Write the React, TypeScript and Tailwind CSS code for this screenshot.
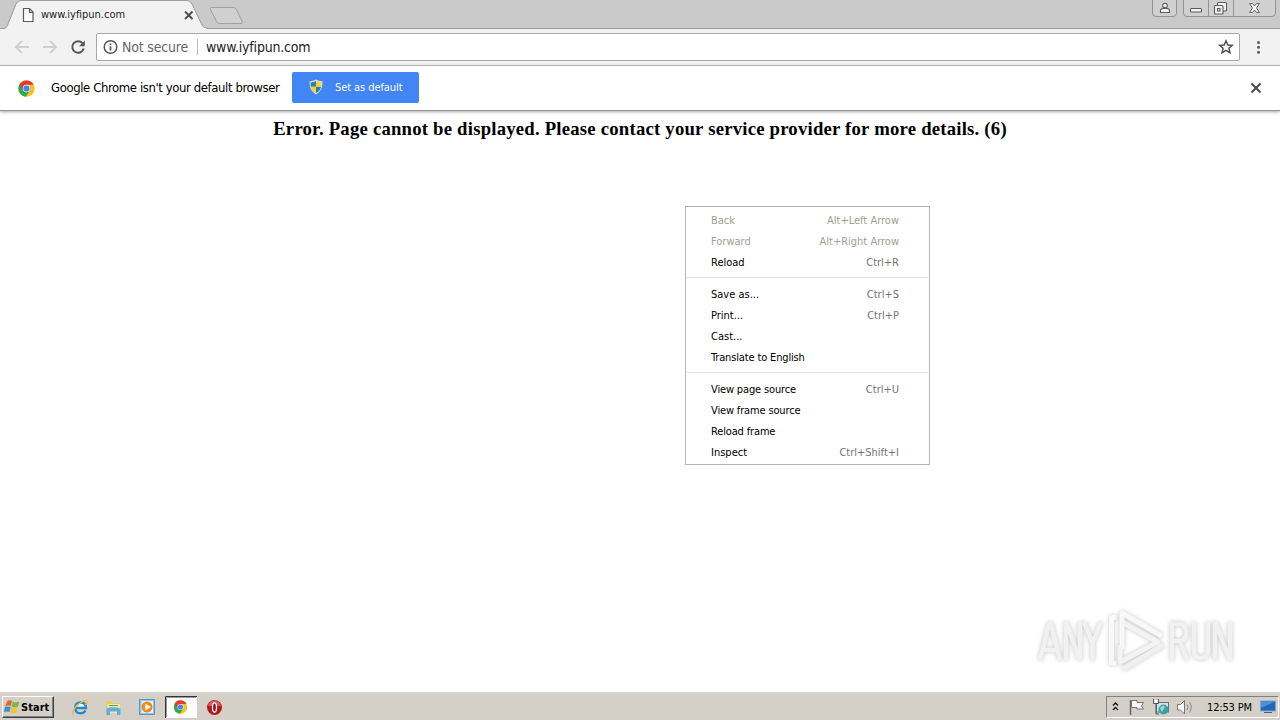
import React from "react";

function ChromeLogo({ className }: { className: string }) {
  return (
    <svg viewBox="0 0 48 48" className={className}>
      <circle cx="24" cy="24" r="23" fill="#fbc116" />
      <path d="M4.1 12.5 A23 23 0 0 0 22 47 L33.5 29.5 L24 24 Z" fill="#2da94f" />
      <path d="M4.1 12.5 A23 23 0 0 1 44.2 13.500 H24 L14.500 29.500 Z" fill="#e33b2e" />
      <circle cx="24" cy="24" r="10.500" fill="#f4f7ff" />
      <circle cx="24" cy="24" r="8.8" fill="#4285f4" />
    </svg>
  );
}

function TabStrip() {
  return (
    <div className="relative flex h-[29px] shrink-0 bg-[#cacaca]">
      <svg className="block h-[29px] w-[250px]" viewBox="0 0 250 29">
        <path d="M0 28.500 H4 C7 28 7 26 8 24 L16 4 Q18 .5 21 .5 H187 Q190 .5 192 4 L202 25 Q203.500 28.500 208 28.500 H250 V30 H0 Z" fill="#f2f2f2" stroke="#9b9b9b" />
        <path d="M6 28 H206 V29.500 H6Z" fill="#f2f2f2" />
        <path d="M211 7.500 H233.500 Q235.500 7.500 236.500 9.500 L242 21.500 Q243 23.500 241 23.500 H220 Q217.500 23.500 216.500 21.500 L210.500 9.500 Q209.500 7.500 211 7.500Z" fill="#d0d0d0" stroke="#a0a0a0" />
        <path d="M23.500 8.500 H29.500 L33 12 V21.500 H23.500Z M29.500 8.500 V12.500 H33" fill="#fff" stroke="#5a5a5a" strokeWidth="1.200" />
        <path d="M185 11.500 L192.500 19 M192.500 11.500 L185 19" stroke="#4a4a4a" strokeWidth="1.800" />
      </svg>
      <span className="absolute top-[8px] left-[41px] text-[11px] leading-[14px] tracking-[-0.02px] whitespace-pre text-[#222]">www.iyfipun.com</span>
      <div className="grow border-b border-[#9b9b9b]" />
      <svg className="absolute top-0 right-0 h-[18px] w-[130px]" viewBox="1150 0 130 18">
        <g fill="#d0d0d0" stroke="#939393">
          <path d="M1152.500 -1 V13 Q1152.500 16.500 1156 16.500 H1173 Q1176.500 16.500 1176.500 13 V-1Z" />
          <path d="M1183.500 -1 V13 Q1183.500 16.500 1187 16.500 H1272 Q1275.500 16.500 1275.500 13 V-1Z" />
          <path d="M1208.500 0 V16 M1233.500 0 V16" />
        </g>
        <g fill="#f4f4f4" stroke="#5c5c5c" strokeWidth="1.100">
          <path d="M1160.500 12.500 V11 Q1160.500 8.500 1163 8.500 H1167 Q1169.500 8.500 1169.500 11 V12.500Z" />
          <circle cx="1165" cy="5.500" r="2.300" />
          <rect x="1190.500" y="8.500" width="11" height="3.500" rx="1" />
          <rect x="1217.500" y="2.500" width="9" height="8.500" rx="1" />
          <rect x="1214.500" y="5.500" width="8.500" height="8.500" rx="1" />
          <rect x="1217.500" y="8.500" width="2.500" height="2.500" />
          <path d="M1249.500 3.500 H1252.500 L1254.500 6 L1256.500 3.500 H1259.500 L1256.500 8 L1259.500 12.500 H1256.500 L1254.500 10 L1252.500 12.500 H1249.500 L1252.500 8Z" strokeWidth=".9" />
        </g>
      </svg>
    </div>
  );
}

function Toolbar() {
  return (
    <div className="flex h-[37px] shrink-0 items-center border-b border-[#b4b4b4] bg-[#f2f2f2]">
      <svg className="h-[36px] w-[96px] shrink-0" viewBox="0 29 96 36" fill="none">
        <path d="M29 47 H16 M22 40.800 L15.800 47 L22 53.200" stroke="#cfcfcf" strokeWidth="1.900" />
        <path d="M43 47 H56 M50 40.800 L56.200 47 L50 53.200" stroke="#cfcfcf" strokeWidth="1.900" />
        <path d="M82.500 43.200 A5.800 5.800 0 1 0 83.700 48.500" stroke="#575757" strokeWidth="2" />
        <path d="M84.800 40.500 V46.300 H79Z" fill="#575757" />
      </svg>
      <div className="flex h-[28px] w-[1144px] items-center rounded-[2px] border border-[#a9a9a9] bg-white">
        <svg className="ml-[6px] h-4 w-4" viewBox="0 0 16 16" fill="none">
          <circle cx="7.500" cy="8" r="6.300" stroke="#555" strokeWidth="1.500" />
          <path d="M7.500 7.200 V11.500 M7.500 4.500 V6" stroke="#555" strokeWidth="1.700" />
        </svg>
        <span className="ml-[3px] w-[75px] text-[14px] leading-[18px] tracking-[-0.18px] whitespace-pre text-[#666]">Not secure</span>
        <span className="h-4 w-px bg-[#bcbcbc]" />
        <span className="ml-[8px] text-[14px] leading-[18px] tracking-[-0.2px] whitespace-pre text-[#222]">www.iyfipun.com</span>
        <svg className="mr-[5px] ml-auto h-4 w-4" viewBox="0 0 16 16">
          <path d="M8 1.800 L9.800 6 L14.300 6.300 L10.900 9.200 L12 13.700 L8 11.300 L4 13.700 L5.100 9.200 L1.700 6.300 L6.200 6Z" fill="none" stroke="#4c4c4c" strokeWidth="1.400" />
        </svg>
      </div>
      <svg className="h-[36px] w-[40px]" viewBox="1240 29 40 36" fill="#5a5a5a">
        <circle cx="1258.500" cy="42.500" r="1.500" />
        <circle cx="1258.500" cy="47.300" r="1.500" />
        <circle cx="1258.500" cy="52.200" r="1.500" />
      </svg>
    </div>
  );
}

function InfoBar() {
  return (
    <div className="flex h-[45px] shrink-0 items-center border-b border-[#929292] bg-white shadow-[0_1px_3px_#aaa]">
      <ChromeLogo className="ml-[18px] h-[17px] w-[17px]" />
      <span className="ml-[16px] w-[241px] text-[13px] leading-4 tracking-[-0.4px] whitespace-pre text-black">Google Chrome isn't your default browser</span>
      <div className="mb-[2px] flex h-[31px] w-[127px] items-center rounded-[2px] bg-[#4285f4]">
        <svg className="ml-[17px] h-[16px] w-[14px]" viewBox="0 0 14 16">
          <path d="M7 .5 Q10 2.500 13.500 2.200 Q14 11.500 7 15.500 Q0 11.500 .5 2.200 Q4 2.500 7 .5Z" fill="#dfe0cf" />
          <path d="M7 2 Q4.500 3.500 1.700 3.400 L1.700 7.700 H7Z M7 7.700 H12.100 Q11.500 11.500 7 14Z" fill="#2d7fae" />
          <path d="M7 2 Q9.500 3.500 12.300 3.400 L12.200 7.700 H7Z M7 7.700 H1.900 Q2.500 11.500 7 14Z" fill="#f6cf35" />
        </svg>
        <span className="mt-px ml-[12px] text-[11px] leading-[14px] tracking-[-0.08px] whitespace-pre text-white">Set as default</span>
      </div>
      <svg className="mr-[18px] ml-auto h-[12px] w-[12px]" viewBox="0 0 12 12">
        <path d="M1.500 1.500 L10.500 10.500 M10.500 1.500 L1.500 10.500" stroke="#4a4a4a" strokeWidth="2" />
      </svg>
    </div>
  );
}

type Item = { label: string; keys?: string; disabled?: boolean };

const groups: Item[][] = [
  [
    { label: "Back", keys: "Alt+Left Arrow", disabled: true },
    { label: "Forward", keys: "Alt+Right Arrow", disabled: true },
    { label: "Reload", keys: "Ctrl+R" },
  ],
  [
    { label: "Save as...", keys: "Ctrl+S" },
    { label: "Print...", keys: "Ctrl+P" },
    { label: "Cast..." },
    { label: "Translate to English" },
  ],
  [
    { label: "View page source", keys: "Ctrl+U" },
    { label: "View frame source" },
    { label: "Reload frame" },
    { label: "Inspect", keys: "Ctrl+Shift+I" },
  ],
];

function ContextMenu() {
  return (
    <div className="absolute top-[206px] left-[685px] h-[259px] w-[245px] border border-[#b5b5b5] bg-white px-px pt-[4px] text-[11px]">
      {groups.map((items, i) => (
        <div key={i} className={i > 0 ? "mt-[3px] border-t border-[#e2e2e2] pt-[7px]" : ""}>
          {items.map((item) => (
            <div key={item.label} className="flex h-[21px] items-center justify-between pr-[29px] pl-[24px] whitespace-pre">
              <span className={item.disabled ? "text-[#a09f92]" : item.label.length > 10 ? "tracking-[-0.15px] text-black" : "text-black"}>{item.label}</span>
              <span className={item.disabled ? "text-[#a09f92]" : "text-[#747474]"}>{item.keys}</span>
            </div>
          ))}
        </div>
      ))}
    </div>
  );
}

function Watermark() {
  return (
    <svg className="absolute top-[600px] left-[1024px] h-[84px] w-[220px]" viewBox="1024 600 220 84">
      <g style={{ filter: "drop-shadow(0 0 2px #c4c4c4)" }}>
        <g fill="none" stroke="#f1f1f1" strokeWidth="4.500">
          <path d="M1040 660 L1049 624 H1051 L1060 660 M1043 650 H1057" />
          <path d="M1066 660 V624 H1067 L1079 658 H1080 V622" />
          <path d="M1084 622 L1092.500 643 L1101 622 M1092.500 642 V660" />
          <path d="M1172 660 V624 H1180 Q1186 624 1186 633 Q1186 641 1180 641 H1172 M1180 641 L1187 660" />
          <path d="M1194 622 V650 Q1194 658 1201 658 Q1208 658 1208 650 V622" />
          <path d="M1215 660 V624 H1216 L1229 658 H1230 V622" />
        </g>
        <g fill="none" stroke="#f8f8f8" strokeWidth="5" strokeLinejoin="round">
          <path d="M1116.500 617.500 H1111.500 V663 H1116.500" />
          <path d="M1122 649 V613 L1162 636" />
          <path d="M1122 622 L1158 642 L1120 662 V645" stroke="#f3f3f3" />
          <path d="M1163 645 L1123 669" stroke="#f0f0f0" />
        </g>
      </g>
    </svg>
  );
}

function TaskBar() {
  return (
    <div className="flex h-[28px] shrink-0 items-center border-t border-[#dedbd5] bg-[#d4d0c8] pt-px">
      <div className="ml-[2px] flex h-[22px] w-[52px] items-center border border-t-white border-r-[#404040] border-b-[#404040] border-l-white shadow-[inset_-1px_-1px_#808080]">
        <svg className="ml-px h-[16px] w-[16px]" viewBox="0 0 16 16">
          <path d="M3 2.500 Q5 .5 8 1.800 L6.800 7 Q4 6 1.200 7.300Z" fill="#e8622b" />
          <path d="M8.800 2.500 Q11.500 4.500 15.500 2.500 L13.800 7.700 Q10.500 9 7.600 7.400Z" fill="#75b843" />
          <path d="M1 8 Q3.800 6.800 6.800 8 L5.500 13 Q2.800 11.800 0 13Z" fill="#3b8edb" />
          <path d="M7.400 8.200 Q10.500 9.800 13.700 8.500 L12.300 13.400 Q9 15 6.200 13.400Z" fill="#f5c32c" />
        </svg>
        <span className="mt-px ml-px text-[11px] leading-[14px] font-bold tracking-[0.05px] text-black">Start</span>
      </div>
      <svg className="h-[26px] w-[176px]" viewBox="54 694 176 26">
        <g fill="none">
          <path d="M85.500 709 H76 Q76 703 80.500 702.500 Q85.500 703 85.500 709Z" fill="#e8f6ff" />
          <path d="M76 708 H86 Q86 702.500 80.500 702.500 Q75.200 702.500 75.200 708 Q75.500 713.300 80.500 713.300 Q84 713.300 85.500 710.500" stroke="#2389cf" strokeWidth="2.400" />
          <path d="M74 714 Q70.500 713 76.500 706 Q83 700 86.500 700.500 Q88 701.500 85.500 705" stroke="#efba3e" strokeWidth="1.400" />
        </g>
        <path d="M106 701 H111 L112 703 H119 V713 H106Z" fill="#ecc860" />
        <path d="M107.500 704 H120 V713 H107.500Z" fill="#fae79f" />
        <path d="M106.500 708.500 Q113 706 120.500 708.500 V715 H117 V711.500 H110 V715 H106.500Z" fill="#60aedb" />
        <path d="M109 705.500 H118" stroke="#4eaa72" />
        <rect x="139.500" y="699.500" width="15" height="15" fill="#8dc4ed" stroke="#5598ca" />
        <rect x="141.500" y="701" width="11.500" height="12" fill="#e8f4fb" />
        <circle cx="147" cy="707" r="5.500" fill="#f08a13" />
        <path d="M145.300 703.500 L151 707 L145.300 710.500Z" fill="#fff" />
        <rect x="165" y="696" width="32" height="22" fill="#fff" />
        <path d="M165.500 718 V696.500 H197" stroke="#333" fill="none" />
        <path d="M166.500 717 V697.500 H196" stroke="#999" fill="none" />
        <svg x="173.500" y="700" width="14" height="14" viewBox="0 0 48 48">
          <circle cx="24" cy="24" r="23" fill="#fbc116" />
          <path d="M4.1 12.5 A23 23 0 0 0 22 47 L33.5 29.5 L24 24 Z" fill="#2da94f" />
          <path d="M4.1 12.5 A23 23 0 0 1 44.2 13.500 H24 L14.500 29.500 Z" fill="#e33b2e" />
          <circle cx="24" cy="24" r="10.500" fill="#f4f7ff" />
          <circle cx="24" cy="24" r="8.800" fill="#4285f4" />
        </svg>
        <circle cx="214.500" cy="707.500" r="7.500" fill="#b5171d" />
        <path d="M208 706 Q209 700.500 214.500 700.500 Q220 700.500 221 706Z" fill="#d9575b" />
        <ellipse cx="214.500" cy="707.500" rx="2" ry="4.600" fill="#8d1015" stroke="#fff" strokeWidth="1.300" />
      </svg>
      <div className="mr-px ml-auto flex h-[22px] w-[173px] items-center border border-t-[#808080] border-r-white border-b-white border-l-[#808080]">
        <svg className="h-[20px] w-[92px]" viewBox="1107 697 92 20">
          <path d="M1113 705.500 L1115.500 703 L1118 705.500 M1113 710 L1115.500 707.500 L1118 710" stroke="#111" strokeWidth="1.300" fill="none" />
          <path d="M1130.500 700 V715" stroke="#666" strokeWidth="1.500" />
          <path d="M1131.500 700.500 H1137 V702.500 H1143.500 L1141.500 706 L1143.500 709 H1137 V707.500 H1131.500Z" fill="#f7f7f7" stroke="#777" />
          <rect x="1156.500" y="702.500" width="12" height="9.500" fill="#cfe6ea" stroke="#5b7480" />
          <path d="M1153.500 699 V703.500 H1158.500 V699 M1156 703.500 V714 H1159" fill="none" stroke="#555" />
          <path d="M1154 700 H1158 V703 H1154Z" fill="#fff" />
          <circle cx="1163.500" cy="709.500" r="5" fill="#3f9fa3" />
          <path d="M1160 708 Q1163 704 1165 707 L1162 712Z M1165 711 L1168 709" fill="#9ed9c3" />
          <path d="M1177.500 704.500 H1180.500 L1184.500 700.500 V714 L1180.500 710 H1177.500Z" fill="#fff" stroke="#777" />
          <path d="M1187 704.500 Q1189 707.500 1187 710 M1189.500 702 Q1193 707.500 1189.500 712.500" fill="none" stroke="#888" />
        </svg>
        <span className="mt-px ml-[8px] w-[48px] text-[11px] leading-[14px] tracking-[-0.15px] whitespace-pre text-black">12:53 PM</span>
        <svg className="ml-[5px] h-[16px] w-[16px]" viewBox="0 0 16 16">
          <rect x=".5" y="2" width="15" height="10" fill="#2167b9" stroke="#7ea5cf" />
          <path d="M1 2.500 H15 L1 9Z" fill="#4b91d8" />
          <path d="M4 13.500 H12" stroke="#557" />
        </svg>
      </div>
    </div>
  );
}

export default function App() {
  return (
    <div className="relative flex h-[720px] w-[1280px] flex-col overflow-hidden bg-white font-['DejaVu_Sans_Condensed','DejaVu_Sans',sans-serif]">
      <TabStrip />
      <Toolbar />
      <InfoBar />
      <main className="grow pt-[7px] text-center">
        <h3 className="font-['Liberation_Serif',serif] text-[18.72px] leading-[22px] font-bold tracking-[0.215px] whitespace-pre text-black">Error. Page cannot be displayed. Please contact your service provider for more details. (6)</h3>
      </main>
      <TaskBar />
      <ContextMenu />
      <Watermark />
    </div>
  );
}
